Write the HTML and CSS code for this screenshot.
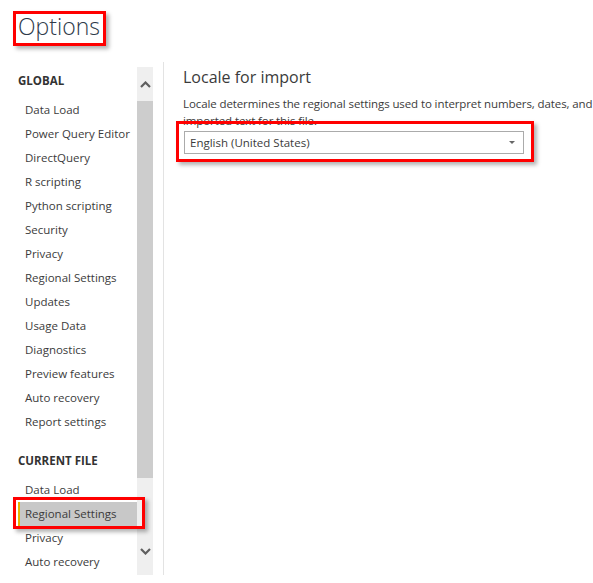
FILE: index.html
```html
<!DOCTYPE html>
<html>
<head>
<meta charset="utf-8">
<link rel="stylesheet" href="styles.css">
</head>
<body>
<div class="page">
  <div class="header"><h1 class="title">Options</h1></div>
  <div class="main">
    <nav class="nav">
      <div class="section">GLOBAL</div>
      <ul class="items">
        <li class="item">Data Load</li>
        <li class="item">Power Query Editor</li>
        <li class="item">DirectQuery</li>
        <li class="item">R scripting</li>
        <li class="item">Python scripting</li>
        <li class="item">Security</li>
        <li class="item">Privacy</li>
        <li class="item">Regional Settings</li>
        <li class="item">Updates</li>
        <li class="item">Usage Data</li>
        <li class="item">Diagnostics</li>
        <li class="item">Preview features</li>
        <li class="item">Auto recovery</li>
        <li class="item">Report settings</li>
      </ul>
      <div class="section section-current">CURRENT FILE</div>
      <ul class="items">
        <li class="item">Data Load</li>
        <li class="item item-selected">Regional Settings</li>
        <li class="item">Privacy</li>
        <li class="item">Auto recovery</li>
      </ul>
    </nav>
    <div class="scrollbar">
      <div class="sb-btn">
        <svg width="11" height="7" viewBox="0 0 11 7"><path d="M1 6 L5.5 1.5 L10 6" fill="none" stroke="#5f5f5f" stroke-width="2.2"/></svg>
      </div>
      <div class="sb-thumb"></div>
      <div class="sb-rest">
        <svg width="11" height="7" viewBox="0 0 11 7"><path d="M1 1 L5.5 5.5 L10 1" fill="none" stroke="#5f5f5f" stroke-width="2.2"/></svg>
      </div>
    </div>
    <section class="content">
      <h2 class="heading">Locale for import</h2>
      <p class="desc">Locale determines the regional settings used to interpret numbers, dates, and imported text for this file.</p>
      <div class="select">
        <span class="select-text">English (United States)</span>
        <span class="select-arrow"></span>
      </div>
    </section>
  </div>
  <div class="mark mark-title"></div>
  <div class="mark mark-select"></div>
  <div class="mark mark-nav"></div>
</div>
</body>
</html>
```
FILE: styles.css
```css
html, body {
  margin: 0;
  padding: 0;
  background: #ffffff;
}
body {
  font-family: "Open Sans", "Noto Sans", sans-serif;
  color: #3b3b3b;
  overflow: hidden;
}
.page {
  position: relative;
  width: 593px;
  height: 583px;
  display: flex;
  flex-direction: column;
}
.header {
  height: 62px;
  box-sizing: border-box;
  padding: 10px 0 0 18px;
}
.title {
  margin: 0;
  font-size: 23px;
  font-weight: 300;
  line-height: 32px;
  color: #2e3a4a;
}
.main {
  display: flex;
  height: 521px;
}
.nav {
  width: 137px;
  box-sizing: border-box;
  padding: 7px 0 0 18px;
  font-size: 11.5px;
}
.section {
  height: 24px;
  line-height: 24px;
  font-weight: 700;
  color: #333;
  margin-bottom: 5px;
}
.section-current {
  margin-top: 15px;
}
.items {
  list-style: none;
  margin: 0;
  padding: 0;
}
.item {
  height: 24px;
  line-height: 24px;
  padding-left: 7px;
  color: #3b3b3b;
  white-space: nowrap;
}
.item-selected {
  background: #c8c8c8;
  border-left: 2px solid #e8b400;
  padding-left: 5px;
}
.scrollbar {
  width: 16px;
  margin-top: 5px;
  height: 508px;
  background: #efefef;
  display: flex;
  flex-direction: column;
}
.sb-btn {
  height: 34px;
  display: flex;
  align-items: center;
  justify-content: center;
}
.sb-thumb {
  height: 377px;
  background: #cdcdcd;
}
.sb-rest {
  flex: 1;
  display: flex;
  align-items: flex-end;
  justify-content: center;
  padding-bottom: 20px;
}
.content {
  margin-left: 10px;
  border-left: 1px solid #e3e3e3;
  height: 513px;
  padding-left: 19px;
  flex: 1;
  min-width: 0;
}
.heading {
  margin: 0;
  padding-top: 3px;
  font-size: 16px;
  font-weight: 400;
  line-height: 24px;
  color: #3b3b3b;
}
.desc {
  margin: 6px 0 0 0;
  font-size: 11.5px;
  letter-spacing: -0.1px;
  line-height: 17px;
  color: #3b3b3b;
  width: 414px;
}
.select {
  margin: 2px 0 0 1px;
  width: 340px;
  height: 23px;
  box-sizing: border-box;
  border: 1px solid #ababab;
  display: flex;
  align-items: center;
  justify-content: space-between;
  padding: 0 8px 0 5px;
  font-size: 11.5px;
}
.select-arrow {
  width: 0;
  height: 0;
  border-left: 3px solid transparent;
  border-right: 3px solid transparent;
  border-top: 3px solid #666;
}
.mark {
  position: absolute;
  box-sizing: border-box;
  border: 3px solid #ff0000;
  box-shadow: 3px 3px 4px rgba(0, 0, 0, 0.3);
}
.mark-title {
  left: 13px;
  top: 11px;
  width: 93px;
  height: 35px;
}
.mark-select {
  left: 176px;
  top: 121px;
  width: 358px;
  height: 41px;
}
.mark-nav {
  left: 13px;
  top: 497px;
  width: 132px;
  height: 32px;
}
```
